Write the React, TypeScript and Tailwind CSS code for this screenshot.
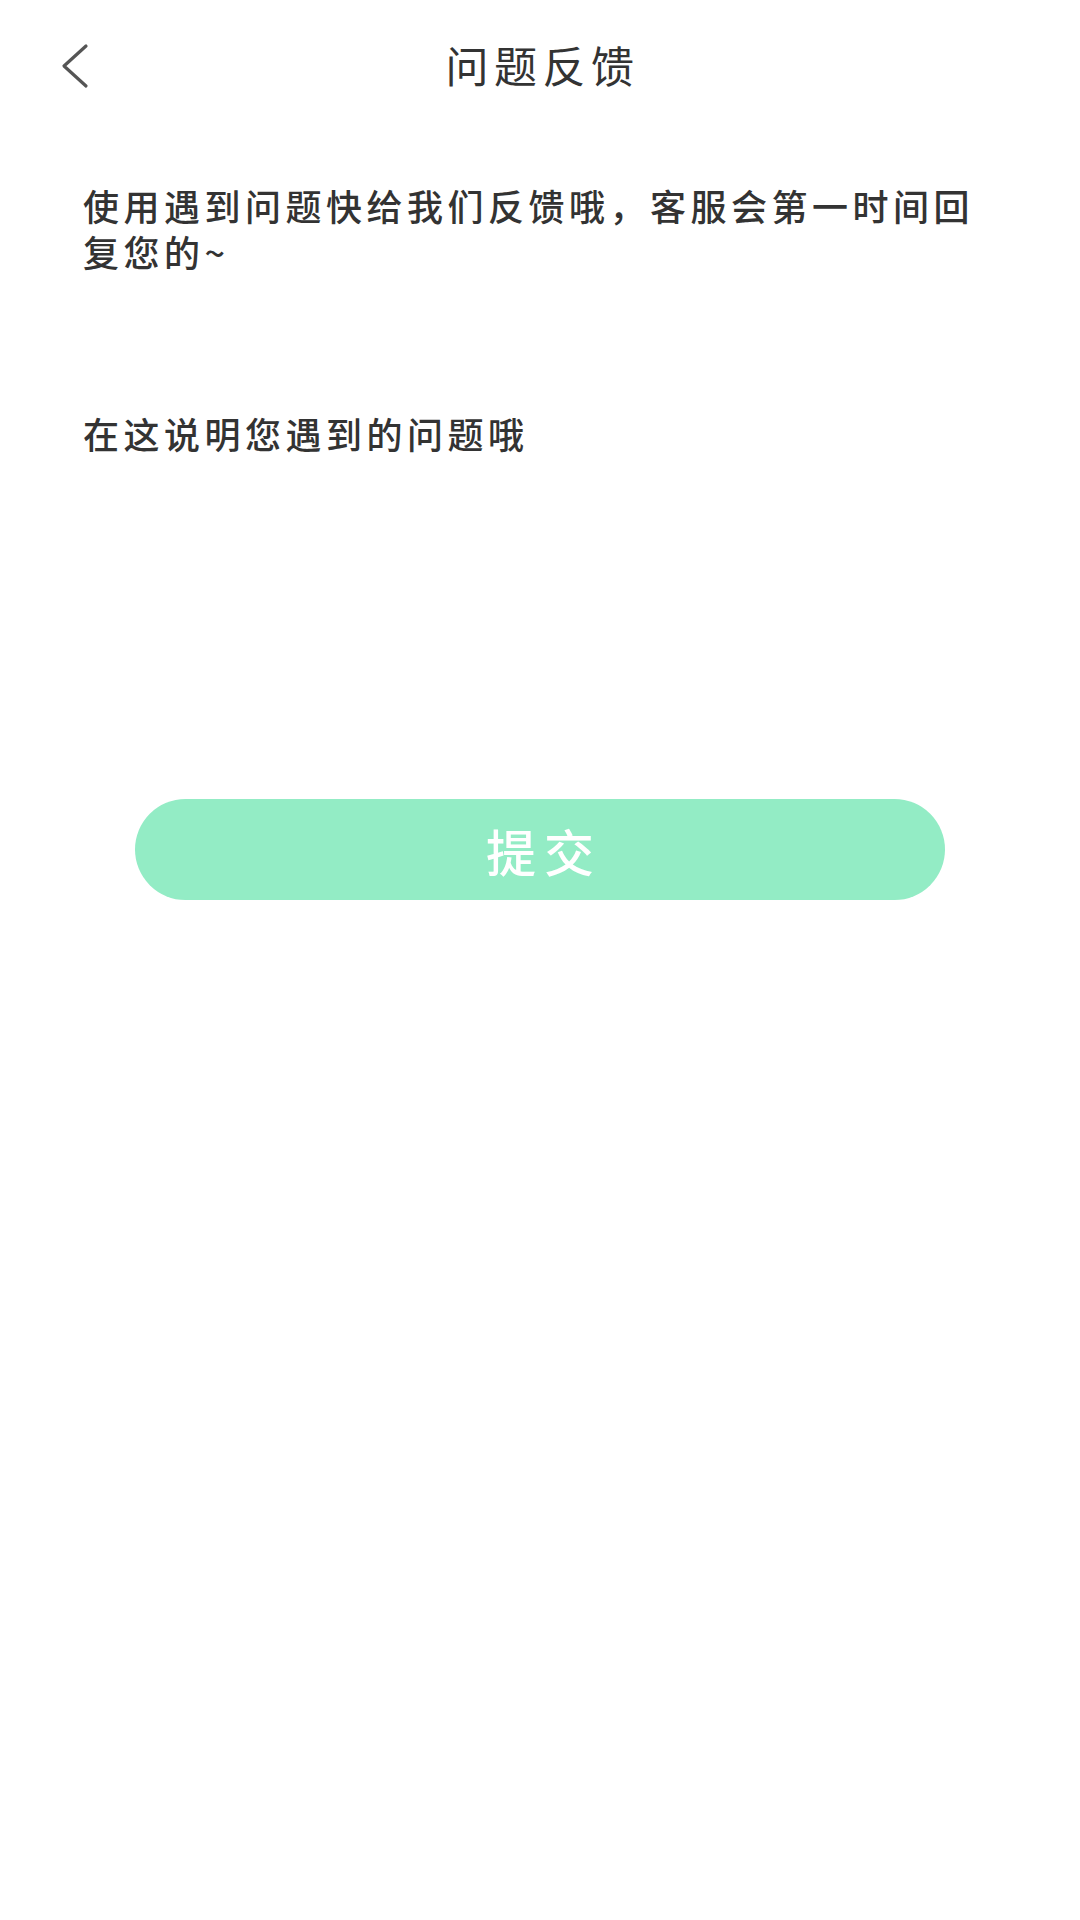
import React from "react";

export default function App() {
  return (
    <div
      className="w-[1080px] h-[1920px] bg-white flex flex-col"
      style={{ fontFamily: '"Noto Sans CJK SC", "Noto Sans", sans-serif' }}
    >
      {/* Header */}
      <div className="relative h-[128px] flex items-center justify-center">
        <button className="absolute left-[58px] top-[42px] w-[34px] h-[48px] flex items-center justify-center">
          <svg width="30" height="46" viewBox="0 0 30 46" fill="none">
            <polyline
              points="26,3 4,23 26,43"
              stroke="#555555"
              strokeWidth="3.2"
              strokeLinecap="round"
              strokeLinejoin="round"
            />
          </svg>
        </button>
        <h1 className="text-[43px] leading-none tracking-[5.5px] pl-[5px] text-[#333333] font-normal">
          问题反馈
        </h1>
      </div>

      {/* Intro */}
      <p className="mt-[54px] pl-[83px] pr-[92px] text-[36px] leading-[46px] tracking-[4.5px] font-medium text-[#333333]">
        使用遇到问题快给我们反馈哦，客服会第一时间回复您的~
      </p>

      {/* Input area */}
      <div className="mt-[136px] pl-[83px] pr-[83px] h-[389px]">
        <div className="text-[36px] leading-[46px] tracking-[4.5px] font-medium text-[#333333]">
          在这说明您遇到的问题哦
        </div>
      </div>

      {/* Submit */}
      <div className="flex justify-center">
        <button className="w-[810px] h-[101px] rounded-full bg-[#93ecc5] flex items-center justify-center">
          <span className="text-[50px] leading-none tracking-[8px] pl-[8px] font-medium text-white">
            提交
          </span>
        </button>
      </div>
    </div>
  );
}
